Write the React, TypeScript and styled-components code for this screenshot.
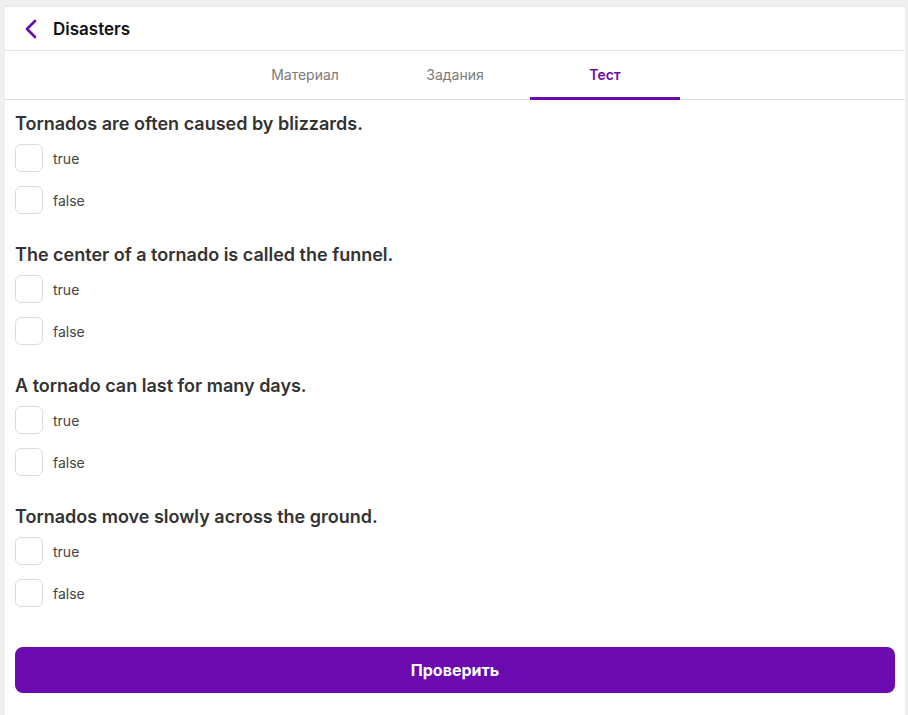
import styled, { createGlobalStyle } from 'styled-components';

type Question = {
	id: number
	text: string
};

const questions: Question[] = [
	{ id: 1, text: 'Tornados are often caused by blizzards.' },
	{ id: 2, text: 'The center of a tornado is called the funnel.' },
	{ id: 3, text: 'A tornado can last for many days.' },
	{ id: 4, text: 'Tornados move slowly across the ground.' },
];

const tabs = ['Материал', 'Задания', 'Тест'];

const GlobalStyle = createGlobalStyle`
	html, body {
		margin: 0;
		padding: 0;
		background: #efefef;
	}
	body {
		font-family: Inter, "Noto Sans", sans-serif;
	}
`;

export default function App() {
	return (
		<>
			<GlobalStyle/>
			<Page>
				<Panel>
					<Header>
						<BackButton aria-label="back">
							<svg width="16" height="20" viewBox="0 0 16 20" fill="none">
								<path d="M12 2 L4 10 L12 18" stroke="#6B0AAE" strokeWidth="2.6" strokeLinecap="round" strokeLinejoin="round"/>
							</svg>
						</BackButton>
						<HeaderTitle>Disasters</HeaderTitle>
					</Header>
					<Tabs>
						{tabs.map((tab, i) => (
							<Tab key={tab} $active={i === 2}>{tab}</Tab>
						))}
					</Tabs>
					<Content>
						{questions.map(q => (
							<QuestionBlock key={q.id}>
								<QuestionTitle>{q.text}</QuestionTitle>
								<Options>
									{['true', 'false'].map(opt => (
										<Option key={opt}>
											<Checkbox type="checkbox"/>
											<OptionLabel>{opt}</OptionLabel>
										</Option>
									))}
								</Options>
							</QuestionBlock>
						))}
						<SubmitButton>Проверить</SubmitButton>
					</Content>
				</Panel>
			</Page>
		</>
	);
}

const Page = styled.div`
	padding: 6px 3px 0 5px;
	min-height: 715px;
	box-sizing: border-box;
	display: flex;
`;

const Panel = styled.div`
	flex: 1;
	background: #fff;
	border-top: 1px solid #e6e6e6;
	display: flex;
	flex-direction: column;
`;

const Header = styled.div`
	height: 43px;
	display: flex;
	align-items: center;
	gap: 14px;
	padding-left: 18px;
	border-bottom: 1px solid #e8dcf3;
`;

const BackButton = styled.button`
	border: none;
	background: none;
	padding: 0;
	display: flex;
	align-items: center;
	cursor: pointer;
`;

const HeaderTitle = styled.span`
	font-size: 17px;
	font-weight: 600;
	color: #111;
`;

const Tabs = styled.div`
	height: 48px;
	display: flex;
	justify-content: center;
	border-bottom: 1px solid #dedede;
`;

const Tab = styled.div<{ $active?: boolean }>`
	width: 150px;
	display: flex;
	align-items: center;
	justify-content: center;
	font-size: 14px;
	font-weight: ${p => (p.$active ? 600 : 400)};
	color: ${p => (p.$active ? '#6B0AAE' : '#7a7a7a')};
	border-bottom: 3px solid ${p => (p.$active ? '#6B0AAE' : 'transparent')};
	margin-bottom: -1px;
`;

const Content = styled.div`
	padding: 12px 10px 22px;
	display: flex;
	flex-direction: column;
	gap: 29px;
`;

const QuestionBlock = styled.div`
	display: flex;
	flex-direction: column;
	gap: 8px;
`;

const QuestionTitle = styled.h3`
	margin: 0;
	font-size: 18px;
	line-height: 24px;
	font-weight: 600;
	color: #333;
`;

const Options = styled.div`
	display: flex;
	flex-direction: column;
	gap: 14px;
`;

const Option = styled.label`
	display: flex;
	align-items: center;
	gap: 10px;
	cursor: pointer;
`;

const Checkbox = styled.input`
	appearance: none;
	margin: 0;
	width: 28px;
	height: 28px;
	border: 1px solid #dcdcdc;
	border-radius: 6px;
	background: #fff;
`;

const OptionLabel = styled.span`
	font-size: 14px;
	color: #444;
`;

const SubmitButton = styled.button`
	margin-top: 11px;
	height: 46px;
	border: none;
	border-radius: 8px;
	background: #6B0AAE;
	color: #fff;
	font-family: Inter, "Noto Sans", sans-serif;
	font-size: 16px;
	font-weight: 700;
	cursor: pointer;
`;
